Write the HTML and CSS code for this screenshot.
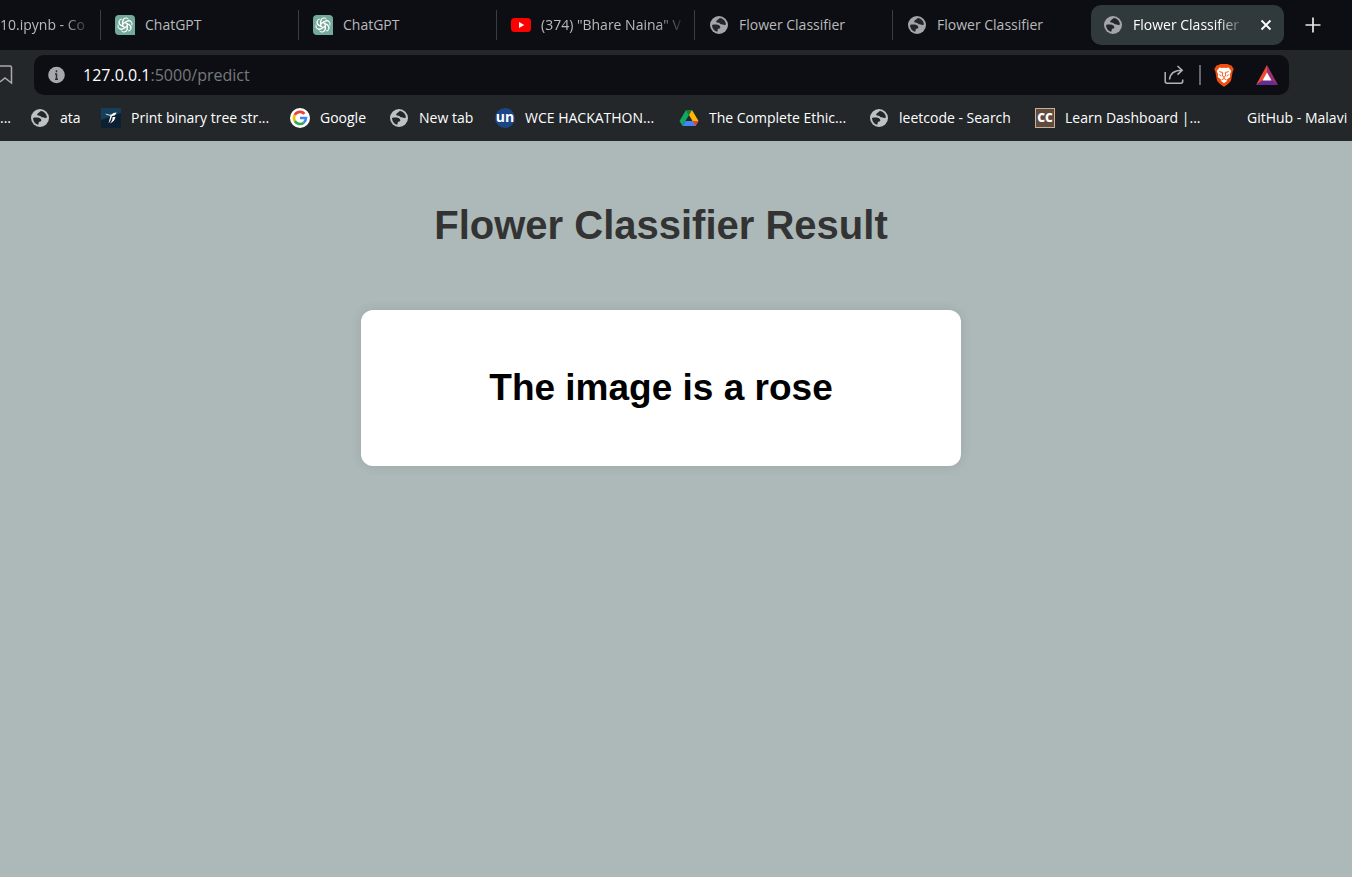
FILE: index.html
```html
<!DOCTYPE html>
<html lang="en">
<head>
<meta charset="utf-8">
<title>Flower Classifier</title>
<link rel="stylesheet" href="styles.css">
</head>
<body>
<svg class="defs" aria-hidden="true">
  <symbol id="globe" viewBox="0 0 20 20">
    <circle cx="10" cy="10" r="9" fill="currentColor"/>
    <path class="land" d="M11 3C9.500 3.300 9.400 4.600 8.400 5C7.200 5.500 6.800 6.700 7.700 7.500C8.600 8.200 10.200 7.500 10.900 8.400C11.700 9.800 13.600 8.900 14.500 9.800C15.300 10.400 16.200 10 17 9.600C16.800 6.300 14.500 3.600 11 3ZM3 9.900C5.500 9.300 9.300 9.200 10.800 11C12.200 12.900 10.600 13.800 9.300 13.700C8.200 13.800 9.200 15.600 8.200 16.800C5.200 16 3.100 13.400 3 9.900Z"/>
  </symbol>
  <symbol id="gpt" viewBox="0 0 20 20">
    <path d="M4 0H16A4 4 0 0 1 20 4V20H4A4 4 0 0 1 0 16V4A4 4 0 0 1 4 0Z" fill="#74aa9c"/>
    <g fill="none" stroke="#fff" stroke-width="1">
      <path id="petal" d="M7.700 11.300V6A3.300 3.300 0 0 1 13.600 4.200M8 8.700L12.400 6.100A3.300 3.300 0 0 1 16 6.700"/>
      <use href="#petal" transform="rotate(60 10 10)"/>
      <use href="#petal" transform="rotate(120 10 10)"/>
      <use href="#petal" transform="rotate(180 10 10)"/>
      <use href="#petal" transform="rotate(240 10 10)"/>
      <use href="#petal" transform="rotate(300 10 10)"/>
    </g>
  </symbol>
</svg>

<header class="browser">
  <nav class="tabs" aria-label="Tabs">
    <a class="tab tab-first" href="#"><span class="title fade">10.ipynb - Co</span></a>
    <a class="tab" href="#"><svg class="icon"><use href="#gpt"/></svg><span class="title">ChatGPT</span></a>
    <a class="tab" href="#"><svg class="icon"><use href="#gpt"/></svg><span class="title">ChatGPT</span></a>
    <a class="tab" href="#">
      <svg class="icon" viewBox="0 0 20 20"><rect y="3" width="20" height="14" rx="3.500" fill="#f00"/><path d="M8 7L13.200 10L8 13Z" fill="#fff"/></svg>
      <span class="title fade">(374) "Bhare Naina" V</span>
    </a>
    <a class="tab" href="#"><svg class="icon"><use href="#globe"/></svg><span class="title">Flower Classifier</span></a>
    <a class="tab" href="#"><svg class="icon"><use href="#globe"/></svg><span class="title">Flower Classifier</span></a>
    <div class="active">
      <a class="active-link" href="#"><svg class="icon"><use href="#globe"/></svg><span class="title fade">Flower Classifier</span></a>
      <button class="plain" aria-label="Close tab"><svg class="close" viewBox="0 0 12 12"><path d="M1.500 1.500L10.500 10.500M10.500 1.500L1.500 10.500" stroke="#fff" stroke-width="1.800"/></svg></button>
    </div>
    <button class="plain new-tab" aria-label="New tab"><svg class="plus" viewBox="0 0 16 16"><path d="M8 0.500V15.500M0.500 8H15.500" stroke="#e8e8e8" stroke-width="1.700"/></svg></button>
  </nav>

  <div class="toolbar">
    <button class="plain bookmark-page" aria-label="Bookmark this page"><svg class="ribbon" viewBox="0 0 14 20"><path d="M0 1H10Q11.500 1 11.500 2.500V18L5 13L0 17" fill="none" stroke="#a9abad" stroke-width="1.500"/></svg></button>
    <div class="address">
      <button class="plain" aria-label="Site information"><svg class="info" viewBox="0 0 18 18"><circle cx="8.500" cy="9" r="8.300" fill="#a5a8ac"/><path d="M8.500 4.300V6.200M8.500 7.500V13.500M7 8H8.500M7 13.200H10" stroke="#2c2e33" stroke-width="1.500"/></svg></button>
      <a class="url" href="#">127.0.0.1<span class="url-rest">:5000/predict</span></a>
      <button class="plain" aria-label="Share"><svg class="share" viewBox="0 0 20 20"><path d="M1.200 7V16.300Q1.200 18.200 3 18.200H17Q18.700 18.200 18.700 16.300V14.500M5.500 14.500C6 9 9 5.500 18 5.300M13.500 1L18.200 5.300L13.500 9.600" fill="none" stroke="#b2b4b7" stroke-width="1.500"/></svg></button>
      <span class="divider"></span>
      <button class="plain" aria-label="Brave Shields"><svg class="brave" viewBox="0 0 20 23">
        <path d="M4.500 1L6.500 0H13.500L15.500 1L17.500 1.500L19.800 5L18.700 7.500L17 16.500Q16 19 10 22.800Q4 19 3 16.500L1.300 7.500L0.200 5L2.500 1.500Z" fill="#f0500f"/>
        <path d="M5.500 3.500L8 4L10 3.700L12 4L14.500 3.500L17.300 7L15.800 10.500L16.200 13L13 15.500L13 17L10 19.300L7 17L7 15.500L3.800 13L4.200 10.500L2.700 7Z" fill="#fff"/>
        <path d="M5.300 7.600L8.700 8.500M14.700 7.600L11.300 8.500M8.700 8.500L8.300 12L10 13L11.700 12L11.300 8.500M10 13V14.500M7.500 16L10 14.500L12.500 16M5.500 10.500L7 12.500M14.500 10.500L13 12.500" fill="none" stroke="#f0500f" stroke-width="0.900"/>
      </svg></button>
      <button class="plain" aria-label="Rewards"><svg class="bat" viewBox="0 0 22 20">
        <path d="M11 0L0 20L11 13Z" fill="#f04a35"/><path d="M11 0L22 20L11 13Z" fill="#9e2f73"/><path d="M0 20L11 12L22 20Z" fill="#662d91"/><path d="M11 7.500L15.500 15.500H6.500Z" fill="#fff"/>
      </svg></button>
    </div>
  </div>

  <nav class="bookmarks" aria-label="Bookmarks">
    <a class="bookmark" href="#">...</a>
    <a class="bookmark" href="#"><svg class="icon"><use href="#globe"/></svg>ata</a>
    <a class="bookmark" href="#"><svg class="icon" viewBox="0 0 20 20"><rect width="20" height="20" fill="#0b2032"/><path d="M0 0H20V5L0 12Z" fill="#153e58"/><path d="M4 5.500Q6 8 9.500 7.500L7.500 15.500L9.500 12.500L11 8Q14.500 8 15.500 4.500Q12 4.500 10.500 6.500Q7 7 4 5.500ZM11.500 9H14.500Q13.500 13.500 9 15.500Q12 12 11.500 9Z" fill="#fff"/></svg>Print binary tree str...</a>
    <a class="bookmark" href="#"><svg class="icon" viewBox="0 0 20 20"><circle cx="10" cy="10" r="10" fill="#fff"/><g fill="none" stroke-width="2.600"><path d="M14.500 5.800A6 6 0 0 0 4.800 7" stroke="#ea4335"/><path d="M4.800 7A6 6 0 0 0 4.800 13" stroke="#fbbc05"/><path d="M4.800 13A6 6 0 0 0 13.700 14.700" stroke="#34a853"/><path d="M13.700 14.700A6 6 0 0 0 16 10H10" stroke="#4285f4"/></g></svg>Google</a>
    <a class="bookmark" href="#"><svg class="icon"><use href="#globe"/></svg>New tab</a>
    <a class="bookmark" href="#"><span class="icon badge-un">un</span>WCE HACKATHON...</a>
    <a class="bookmark" href="#"><svg class="icon" viewBox="0 0 20 20"><path d="M7 2L0.500 13L3.500 18L10 7Z" fill="#11a861"/><path d="M7 2H13L10 7Z" fill="#188038"/><path d="M13 2L19.500 13H13.500L10 7Z" fill="#ffba00"/><path d="M6.500 13H19.500L16.500 18H3.500Z" fill="#4285f4"/><path d="M13.500 13H19.500L16.500 18Z" fill="#ea4335"/></svg>The Complete Ethic...</a>
    <a class="bookmark" href="#"><svg class="icon"><use href="#globe"/></svg>leetcode - Search</a>
    <a class="bookmark" href="#"><span class="icon badge-cc">CC</span>Learn Dashboard |...</a>
    <a class="bookmark" href="#"><svg class="icon" viewBox="0 0 20 20"><path d="M8 18V15Q3 15 3.500 9Q3 6 4.500 4L8 5H12L15.500 4Q17 6 16.500 9Q17 15 12 15V18" fill="none" stroke="#20272b"/></svg>GitHub - Malavi</a>
  </nav>
</header>

<main class="page">
  <h1 class="heading">Flower Classifier Result</h1>
  <section class="card"><h2 class="result">The image is a rose</h2></section>
</main>
</body>
</html>
```

FILE: styles.css
```css
* { box-sizing: border-box; }

body {
  margin: 0;
  min-height: 100vh;
  display: flex;
  flex-direction: column;
  background: #adb9b8;
  overflow-x: hidden;
}

.defs { position: absolute; width: 0; height: 0; }

a { color: inherit; text-decoration: none; }

.plain {
  display: flex;
  align-items: center;
  justify-content: center;
  padding: 0;
  border: 0;
  background: none;
}

.browser {
  background: #23272a;
  color: #fff;
  font-family: "Open Sans", "Noto Sans", sans-serif;
  font-size: 14px;
  line-height: 20px;
  white-space: nowrap;
  overflow: hidden;
}

.icon { flex: none; width: 20px; height: 20px; color: #bfc2c5; }
.land { fill: #23272a; }

.tabs {
  display: flex;
  align-items: center;
  height: 50px;
  background: #0d0e13;
  color: #b9babc;
}
.tabs .icon { color: #a2a6aa; }

.tab {
  display: flex;
  align-items: center;
  gap: 10px;
  flex: 0 1 198px;
  min-width: 0;
  height: 30px;
  padding: 0 8px 0 14px;
  border-left: 1px solid #3b3d42;
}
.tab-first { flex: 0 0 100px; padding-left: 0; border-left: 0; }

.title { flex: 1; min-width: 0; overflow: hidden; }
.fade {
  -webkit-mask-image: linear-gradient(to right, #000 calc(100% - 28px), transparent);
  mask-image: linear-gradient(to right, #000 calc(100% - 28px), transparent);
}

.active {
  display: flex;
  align-items: center;
  gap: 14px;
  flex: 0 1 193px;
  min-width: 0;
  height: 40px;
  margin-left: 1px;
  padding: 0 12px;
  border-radius: 10px;
  background: #30393c;
  color: #fff;
}
.active-link { display: flex; align-items: center; gap: 10px; flex: 1; min-width: 0; }
.close { width: 12px; height: 12px; }
.new-tab { width: 58px; height: 40px; }
.plus { width: 16px; height: 16px; }

.toolbar {
  display: flex;
  align-items: center;
  gap: 20px;
  height: 50px;
  padding: 5px 63px 5px 0;
}
.bookmark-page { width: 14px; }
.ribbon { width: 14px; height: 20px; }

.address {
  display: flex;
  align-items: center;
  flex: 1;
  min-width: 0;
  height: 40px;
  padding: 0 11px 0 14px;
  border-radius: 10px;
  background: #0d0e13;
}
.info { width: 18px; height: 18px; }
.url { flex: 1; margin-left: 17px; font-size: 16px; }
.url-rest { color: #77797d; }
.share { width: 20px; height: 20px; }
.divider { width: 2px; height: 20px; margin: 0 13px 0 15px; background: #626468; }
.brave { width: 20px; height: 23px; }
.bat { width: 22px; height: 20px; margin-left: 22px; }

.bookmarks {
  display: grid;
  grid-template-columns: 30px 71px 189px 99px 106px 184px 190px 166px 182px 135px;
  align-items: center;
  height: 41px;
  padding-bottom: 6px;
}
.bookmark { display: flex; align-items: center; gap: 10px; }

.badge-un {
  border-radius: 50%;
  background: #1c4585;
  color: #fff;
  font-size: 14px;
  font-weight: 700;
  line-height: 18px;
  text-align: center;
}
.badge-cc {
  border: 1px solid #c7b299;
  background: #614b3f;
  color: #fff;
  font-size: 12px;
  font-weight: 800;
  line-height: 18px;
  text-align: center;
}

.page {
  flex: 1;
  display: flex;
  flex-direction: column;
  align-items: center;
  padding: 60px 30px 60px 0;
  font-family: Arial, "Liberation Sans", sans-serif;
}
.heading { margin: 0; color: #333; font-size: 40px; line-height: 48px; }
.card {
  width: 100%;
  max-width: 600px;
  margin-top: 61px;
  padding: 54px 24px;
  border-radius: 12px;
  background: #fff;
  box-shadow: 0 0 12px rgba(0, 0, 0, 0.1);
  text-align: center;
}
.result { margin: 0; color: #000; font-size: 37px; line-height: 48px; }
```
